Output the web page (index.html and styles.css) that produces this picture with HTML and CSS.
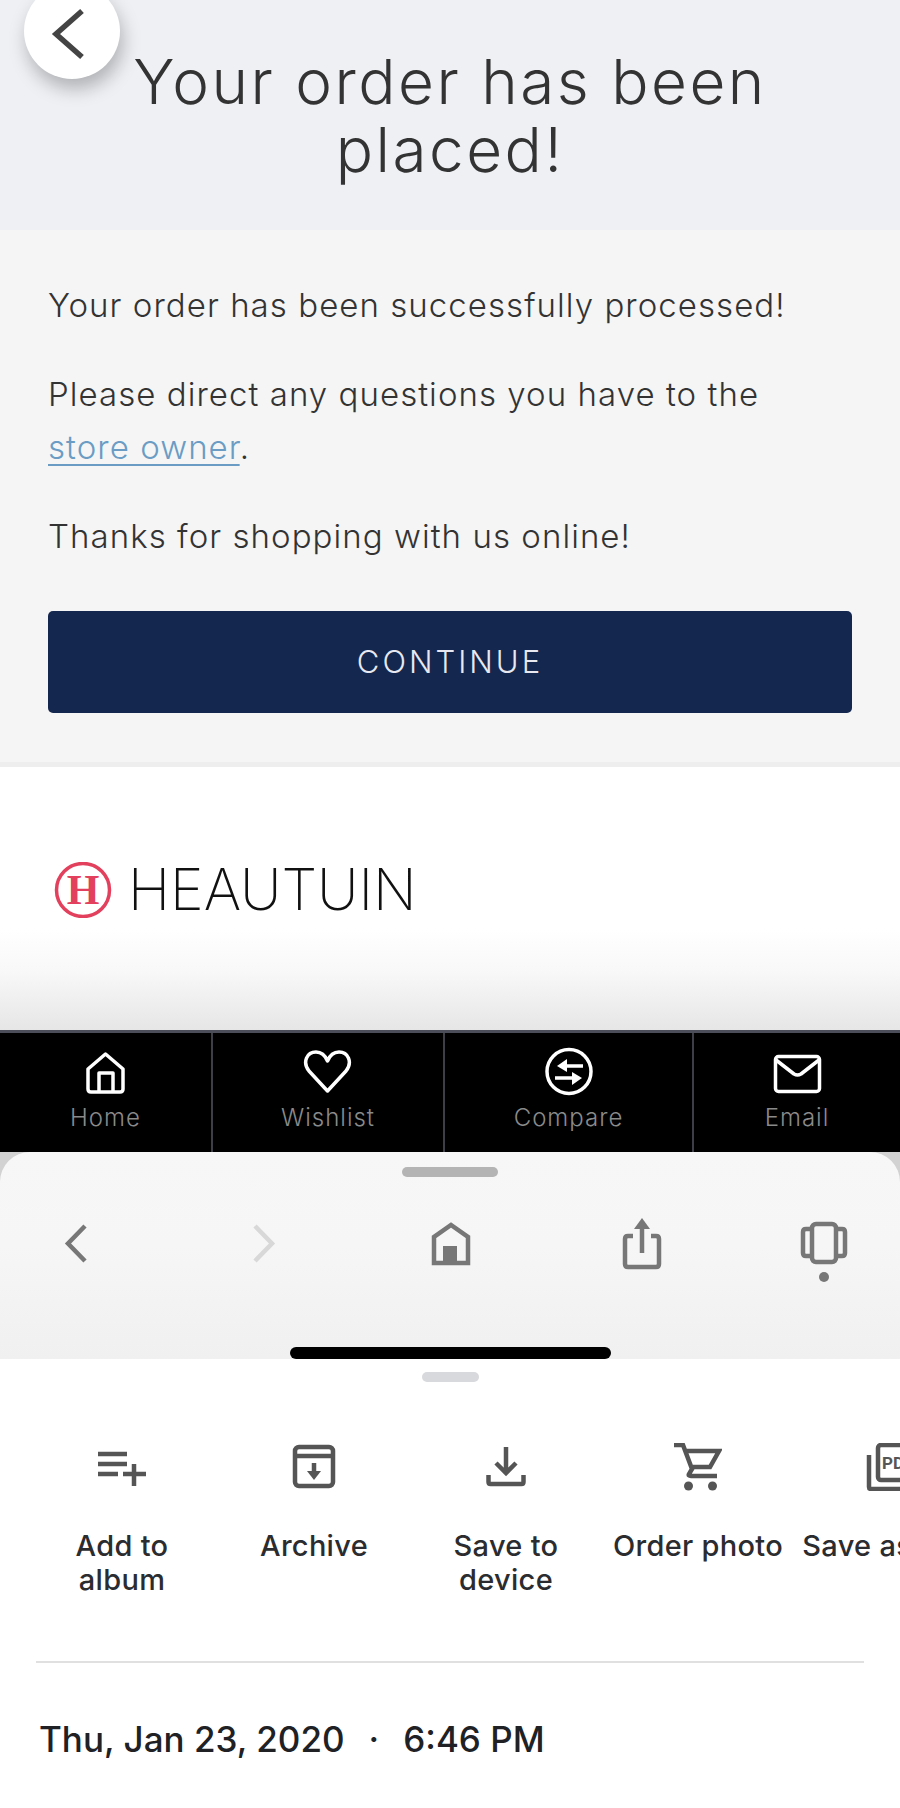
FILE: index.html

```html
<!DOCTYPE html>
<html lang="en">
<head>
  <meta charset="UTF-8">
  <title>Your order has been placed</title>
  <link rel="stylesheet" href="styles.css">
</head>
<body>
  <div class="page">
    <button class="back-btn">
      <svg width="36" height="56" viewBox="0 0 36 56"><polyline points="32,6 6,29 32,52" class="back-line"/></svg>
    </button>

    <header class="head">
      <h1>Your order has been placed!</h1>
    </header>

    <section class="message">
      <p>Your order has been successfully processed!</p>
      <p>Please direct any questions you have to the<br><a href="#">store owner</a>.</p>
      <p>Thanks for shopping with us online!</p>
      <a class="continue" href="#">CONTINUE</a>
    </section>

    <section class="brand">
      <svg class="brand-mark" width="58" height="56" viewBox="0 0 58 56">
        <circle cx="29" cy="28" r="26.500" class="mark-ring"/>
        <text x="29" y="42" text-anchor="middle" class="mark-letter">H</text>
      </svg>
      <span class="brand-name">HEAUTUIN</span>
    </section>

    <nav class="tabbar">
      <a class="tab" href="#">
        <svg width="50" height="50" viewBox="0 0 50 50"><path d="M7 22 24.5 7 42 22V42q0 3-3 3H10q-3 0-3-3Z M18 45V26H32V45"/></svg>
        <span>Home</span>
      </a>
      <a class="tab" href="#">
        <svg width="50" height="50" viewBox="0 0 50 50"><path d="M24.5 44 6 24C-1 15 4 5 13 5 18 5 22 8 24.5 14 27 8 31 5 36 5 45 5 50 15 43 24Z"/></svg>
        <span>Wishlist</span>
      </a>
      <a class="tab" href="#">
        <svg width="50" height="50" viewBox="0 0 50 50">
          <circle cx="25" cy="24.5" r="22"/>
          <path d="M20 19H39M11 31H31"/>
          <polygon class="solid" points="23,12 13,19 23,25"/>
          <polygon class="solid" points="28,25 38,31 28,38"/>
        </svg>
        <span>Compare</span>
      </a>
      <a class="tab" href="#">
        <svg width="50" height="50" viewBox="0 0 50 50"><rect x="3.5" y="9.5" width="44" height="35" rx="3"/><path d="M4 13 22 27q3.500 2 7 0L47 13"/></svg>
        <span>Email</span>
      </a>
    </nav>

    <div class="sheet-wrap">
      <div class="sheet">
        <div class="sheet-handle"></div>
        <div class="browser-icons">
          <svg width="48" height="64" viewBox="0 0 48 64"><polyline points="33,8 16,25.500 33,43"/></svg>
          <svg class="disabled" width="48" height="64" viewBox="0 0 48 64"><polyline points="15,8 32,25.500 15,43"/></svg>
          <svg width="48" height="64" viewBox="0 0 48 64"><path d="M7 45V19L24 7 41 19V45Z"/><rect class="solid" x="16" y="28" width="14" height="18"/></svg>
          <svg width="48" height="64" viewBox="0 0 48 64">
            <path d="M15 18H10q-3 0-3 3V46q0 3 3 3H38q3 0 3-3V21q0-3-3-3H33M24 35V6"/>
            <polygon class="solid" points="24,0 32,11 16,11"/>
          </svg>
          <svg width="48" height="64" viewBox="0 0 48 64">
            <rect x="12" y="6" width="24" height="38" rx="4"/>
            <path d="M12 11H6q-3 0-3 3V35q0 3 3 3H12M36 11H42q3 0 3 3V35q0 3-3 3H36"/>
            <circle class="solid" cx="24" cy="59" r="5"/>
          </svg>
        </div>
        <div class="home-bar"></div>
      </div>
    </div>

    <section class="photo-panel">
      <div class="panel-handle"></div>
      <div class="actions">
        <div class="action">
          <svg width="48" height="48" viewBox="0 0 48 48"><path d="M0 11H29M0 21H29M0 31H20M25 31H48M36 21V43"/></svg>
          <span>Add to<br>album</span>
        </div>
        <div class="action">
          <svg width="48" height="48" viewBox="0 0 48 48">
            <rect x="5" y="4" width="38" height="39" rx="4"/>
            <path d="M5 13H43M24 20V31"/>
            <polygon class="solid" points="17,28 31,28 24,37"/>
          </svg>
          <span>Archive</span>
        </div>
        <div class="action">
          <svg width="48" height="48" viewBox="0 0 48 48"><path d="M24 4V28M14 20 24 30 34 20M6.500 32V39q0 2 2 2H39.500q2 0 2-2V32"/></svg>
          <span>Save to<br>device</span>
        </div>
        <div class="action">
          <svg width="48" height="48" viewBox="0 0 48 48">
            <path d="M0 2H9L18 26 15 31q-1 2 2 2H43M12 8H45L36 24H18"/>
            <circle class="solid" cx="14.500" cy="43" r="4.500"/>
            <circle class="solid" cx="38.500" cy="43" r="4.500"/>
          </svg>
          <span>Order photo</span>
        </div>
        <div class="action">
          <svg width="48" height="48" viewBox="0 0 48 48">
            <path d="M3 12V44q0 2 2 2H48"/>
            <rect x="12" y="2" width="44" height="35" rx="3"/>
            <text x="16" y="26" class="pdf-label">PDF</text>
          </svg>
          <span>Save as PDF</span>
        </div>
      </div>
      <div class="panel-line"></div>
      <div class="photo-date">Thu, Jan 23, 2020<span class="date-dot">·</span>6:46 PM</div>
    </section>
  </div>
</body>
</html>
```

FILE: styles.css

```css
* { box-sizing: border-box; }
html, body { margin: 0; padding: 0; background: #fff; }
.page { position: relative; width: 900px; height: 1808px; overflow: hidden; font-family: Inter, "Liberation Sans", sans-serif; color: #333; }
a { text-decoration: none; }
svg { display: block; fill: none; }

.back-btn { position: absolute; left: 24px; top: -17px; width: 96px; height: 96px; padding: 0 8px 18px 0; border: 0; border-radius: 50%; background: #fff; box-shadow: 3px 10px 18px rgba(0,0,0,.26); display: flex; align-items: flex-end; justify-content: center; }
.back-line { fill: none; stroke: #444; stroke-width: 5.5; }

.head { height: 230px; padding: 48px 130px 0; background: #eef0f4; }
.head h1 { margin: 0; font-size: 62px; line-height: 68px; font-weight: 300; letter-spacing: 2.5px; text-align: center; color: #333; }

.message { height: 537px; padding: 0 48px; background: #f5f5f6; border-bottom: 5px solid #eeeeee; font-size: 33px; line-height: 53px; font-weight: 300; letter-spacing: 1.05px; color: #333; }
.message p { margin: 0 0 36px; }
.message p:first-child { padding-top: 49px; }
.message p a { color: #6a9cc4; text-decoration: underline; text-underline-offset: 5px; text-decoration-thickness: 2px; }
.continue { display: block; height: 102px; margin-top: 48px; line-height: 102px; background: #14274e; color: #e8e9f0; border-radius: 5px; text-align: center; font-size: 31px; font-weight: 300; letter-spacing: 3px; }

.brand { height: 263px; padding: 95px 0 0 54px; background: linear-gradient(#fff 62%, #f8f8f8 78%, #e6e6e6); display: flex; align-items: flex-start; gap: 16px; }
.mark-ring { stroke: #e2405c; stroke-width: 3.5; }
.mark-letter { font-family: "Liberation Serif", serif; font-weight: 700; font-size: 42px; fill: #e2405c; }
.brand-name { font-size: 57px; line-height: 56px; font-weight: 200; color: #111; }

.tabbar { height: 122px; background: #000; border-top: 3px solid #4c4f5a; display: grid; grid-template-columns: 213px 232px 249px 1fr; }
.tab { border-right: 2px solid #3c3f48; display: flex; flex-direction: column; align-items: center; padding-top: 14px; color: #8a8a8a; font-size: 24px; line-height: 28px; font-weight: 300; letter-spacing: 1px; }
.tab:last-child { border-right: 0; }
.tab svg { stroke: #fff; stroke-width: 3.5; stroke-linejoin: round; margin-bottom: 7px; }
.tab .solid { fill: #fff; stroke: none; }

.sheet-wrap { background: #d2d2d2; }
.sheet { height: 207px; padding-top: 15px; border-radius: 30px 30px 0 0; background: linear-gradient(#f7f7f7, #f6f6f6 45%, #f0f0f0); display: flex; flex-direction: column; align-items: center; }
.sheet-handle { width: 96px; height: 10px; border-radius: 5px; background: #b4b4b4; }
.browser-icons { width: 100%; margin-top: 41px; display: grid; grid-template-columns: 152px 224px 150px 232px 132px; justify-items: center; }
.browser-icons svg { stroke: #777; stroke-width: 4.5; }
.browser-icons .solid { fill: #777; stroke: none; }
.browser-icons .disabled { stroke: #d8d8d8; }
.home-bar { width: 321px; height: 12px; margin-top: auto; border-radius: 6px; background: #000; }

.photo-panel { padding-top: 13px; background: #fff; }
.panel-handle { width: 57px; height: 10px; margin: 0 auto; border-radius: 5px; background: #d8d9dc; }
.actions { display: flex; margin: 61px 0 0 26px; }
.action { flex: 0 0 192px; display: flex; flex-direction: column; align-items: center; text-align: center; font-size: 29px; line-height: 34px; font-weight: 500; letter-spacing: 0.3px; color: #2b2c2f; }
.action span { margin-top: 38px; white-space: nowrap; }
.action svg { stroke: #555; stroke-width: 4.5; }
.action .solid { fill: #555; stroke: none; }
.pdf-label { font-family: Roboto, sans-serif; font-weight: 700; font-size: 17px; fill: #555; stroke: none; letter-spacing: 0; }
.panel-line { height: 2px; margin: 64px 36px 0; background: #e0e0e0; }
.photo-date { margin: 54px 0 0 39px; font-size: 35px; line-height: 44px; font-weight: 500; color: #202124; }
.date-dot { margin: 0 24px; }
```
